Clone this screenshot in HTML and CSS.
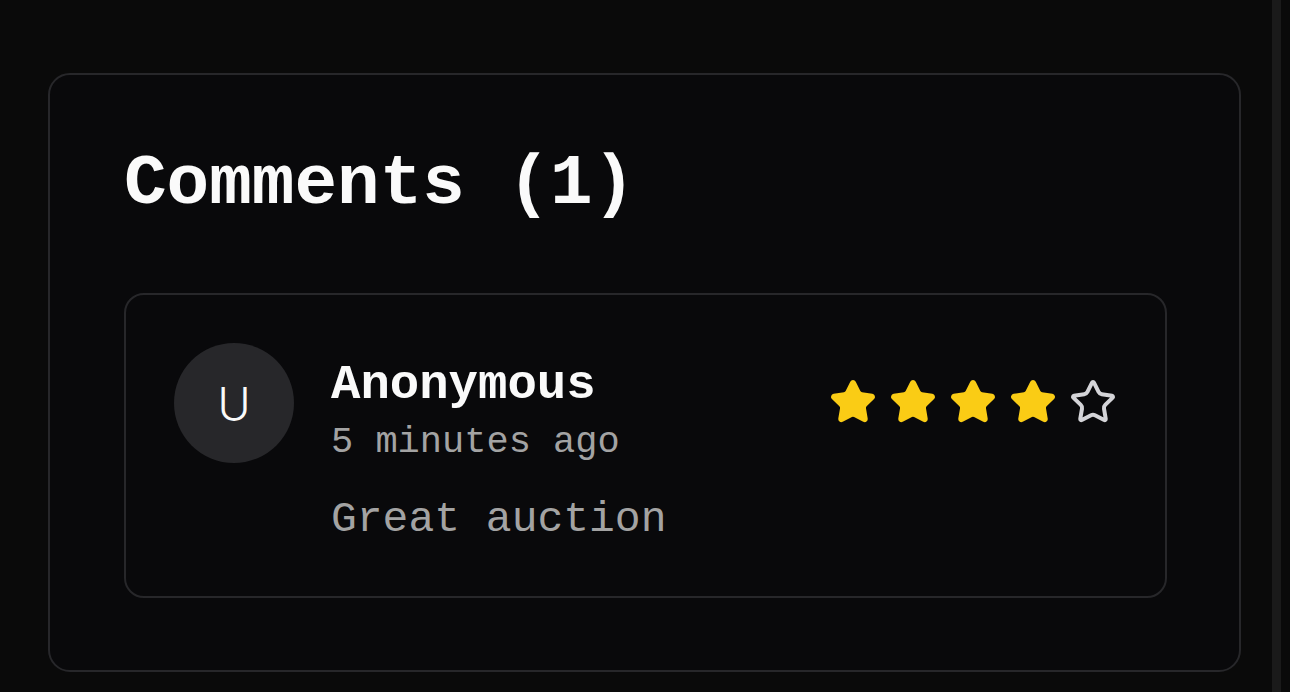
FILE: index.html
```html
<!DOCTYPE html>
<html lang="en">
<head>
<meta charset="utf-8">
<title>Comments</title>
<link rel="stylesheet" href="styles.css">
</head>
<body>
<div class="page">
  <main class="main">
    <section class="comments-card">
      <h2 class="comments-title">Comments (1)</h2>
      <article class="comment">
        <div class="avatar">U</div>
        <div class="comment-body">
          <div class="comment-head">
            <div class="meta">
              <div class="author">Anonymous</div>
              <div class="time">5 minutes ago</div>
            </div>
            <div class="stars">
              <svg class="star star-on" viewBox="0 0 24 24"><path d="M11.525 2.295a.53.53 0 0 1 .95 0l2.31 4.679a2.123 2.123 0 0 0 1.595 1.16l5.166.756a.53.53 0 0 1 .294.904l-3.736 3.638a2.123 2.123 0 0 0-.611 1.878l.882 5.14a.53.53 0 0 1-.771.56l-4.618-2.428a2.122 2.122 0 0 0-1.973 0L6.396 21.01a.53.53 0 0 1-.77-.56l.881-5.139a2.122 2.122 0 0 0-.611-1.879L2.16 9.795a.53.53 0 0 1 .294-.906l5.165-.755a2.122 2.122 0 0 0 1.597-1.16z"/></svg>
              <svg class="star star-on" viewBox="0 0 24 24"><path d="M11.525 2.295a.53.53 0 0 1 .95 0l2.31 4.679a2.123 2.123 0 0 0 1.595 1.16l5.166.756a.53.53 0 0 1 .294.904l-3.736 3.638a2.123 2.123 0 0 0-.611 1.878l.882 5.14a.53.53 0 0 1-.771.56l-4.618-2.428a2.122 2.122 0 0 0-1.973 0L6.396 21.01a.53.53 0 0 1-.77-.56l.881-5.139a2.122 2.122 0 0 0-.611-1.879L2.16 9.795a.53.53 0 0 1 .294-.906l5.165-.755a2.122 2.122 0 0 0 1.597-1.160z"/></svg>
              <svg class="star star-on" viewBox="0 0 24 24"><path d="M11.525 2.295a.53.53 0 0 1 .95 0l2.31 4.679a2.123 2.123 0 0 0 1.595 1.16l5.166.756a.53.53 0 0 1 .294.904l-3.736 3.638a2.123 2.123 0 0 0-.611 1.878l.882 5.14a.53.53 0 0 1-.771.56l-4.618-2.428a2.122 2.122 0 0 0-1.973 0L6.396 21.01a.53.53 0 0 1-.77-.56l.881-5.139a2.122 2.122 0 0 0-.611-1.879L2.16 9.795a.53.53 0 0 1 .294-.906l5.165-.755a2.122 2.122 0 0 0 1.597-1.16z"/></svg>
              <svg class="star star-on" viewBox="0 0 24 24"><path d="M11.525 2.295a.53.53 0 0 1 .95 0l2.31 4.679a2.123 2.123 0 0 0 1.595 1.16l5.166.756a.53.53 0 0 1 .294.904l-3.736 3.638a2.123 2.123 0 0 0-.611 1.878l.882 5.14a.53.53 0 0 1-.771.56l-4.618-2.428a2.122 2.122 0 0 0-1.973 0L6.396 21.01a.53.53 0 0 1-.77-.56l.881-5.139a2.122 2.122 0 0 0-.611-1.879L2.16 9.795a.53.53 0 0 1 .294-.906l5.165-.755a2.122 2.122 0 0 0 1.597-1.16z"/></svg>
              <svg class="star star-off" viewBox="0 0 24 24"><path d="M11.525 2.295a.53.53 0 0 1 .95 0l2.31 4.679a2.123 2.123 0 0 0 1.595 1.16l5.166.756a.53.53 0 0 1 .294.904l-3.736 3.638a2.123 2.123 0 0 0-.611 1.878l.882 5.14a.53.53 0 0 1-.771.56l-4.618-2.428a2.122 2.122 0 0 0-1.973 0L6.396 21.01a.53.53 0 0 1-.77-.56l.881-5.139a2.122 2.122 0 0 0-.611-1.879L2.16 9.795a.53.53 0 0 1 .294-.906l5.165-.755a2.122 2.122 0 0 0 1.597-1.16z"/></svg>
            </div>
          </div>
          <p class="text">Great auction</p>
        </div>
      </article>
    </section>
  </main>
  <div class="scroll-track"></div>
</div>
</body>
</html>
```

FILE: styles.css
```css
* { box-sizing: border-box; }

html, body {
  margin: 0;
  padding: 0;
  background: #0a0a0a;
  height: 692px;
  overflow: hidden;
}

.page {
  display: flex;
  height: 692px;
  padding-right: 9px;
}

.main {
  flex: 1;
  padding: 73px 31px 0 48px;
}

.scroll-track {
  width: 9px;
  background: #1a1a1a;
}

.comments-card {
  border: 2px solid #27272a;
  border-radius: 22px;
  background: #09090b;
  padding: 69px 72px 72px 74px;
  font-family: "Liberation Mono", "DejaVu Sans Mono", monospace;
}

.comments-title {
  margin: 0 0 69px;
  font-size: 71px;
  line-height: 80px;
  font-weight: 700;
  color: #fafafa;
}

.comment {
  display: flex;
  gap: 37px;
  border: 2px solid #27272a;
  border-radius: 20px;
  padding: 48px;
}

.avatar {
  flex: none;
  width: 120px;
  height: 120px;
  border-radius: 50%;
  background: #27272a;
  color: #fafafa;
  display: flex;
  align-items: center;
  justify-content: center;
  font-family: Inter, "Noto Sans", sans-serif;
  font-weight: 300;
  font-size: 45px;
}

.comment-body {
  flex: 1;
  padding-top: 10px;
}

.comment-head {
  display: flex;
  justify-content: space-between;
  align-items: flex-start;
}

.author {
  font-size: 49px;
  line-height: 64px;
  font-weight: 700;
  color: #fafafa;
}

.time {
  font-size: 37px;
  line-height: 51px;
  color: #a3a3a3;
}

.stars {
  display: flex;
  gap: 12px;
  margin-top: 25px;
}

.star {
  width: 48px;
  height: 48px;
  stroke-width: 2;
  stroke-linecap: round;
  stroke-linejoin: round;
}

.star-on {
  fill: #facc15;
  stroke: #facc15;
}

.star-off {
  fill: none;
  stroke: #d4d4d8;
}

.text {
  margin: 24px 0 0;
  font-size: 43px;
  line-height: 56px;
  color: #a3a3a3;
}
```
